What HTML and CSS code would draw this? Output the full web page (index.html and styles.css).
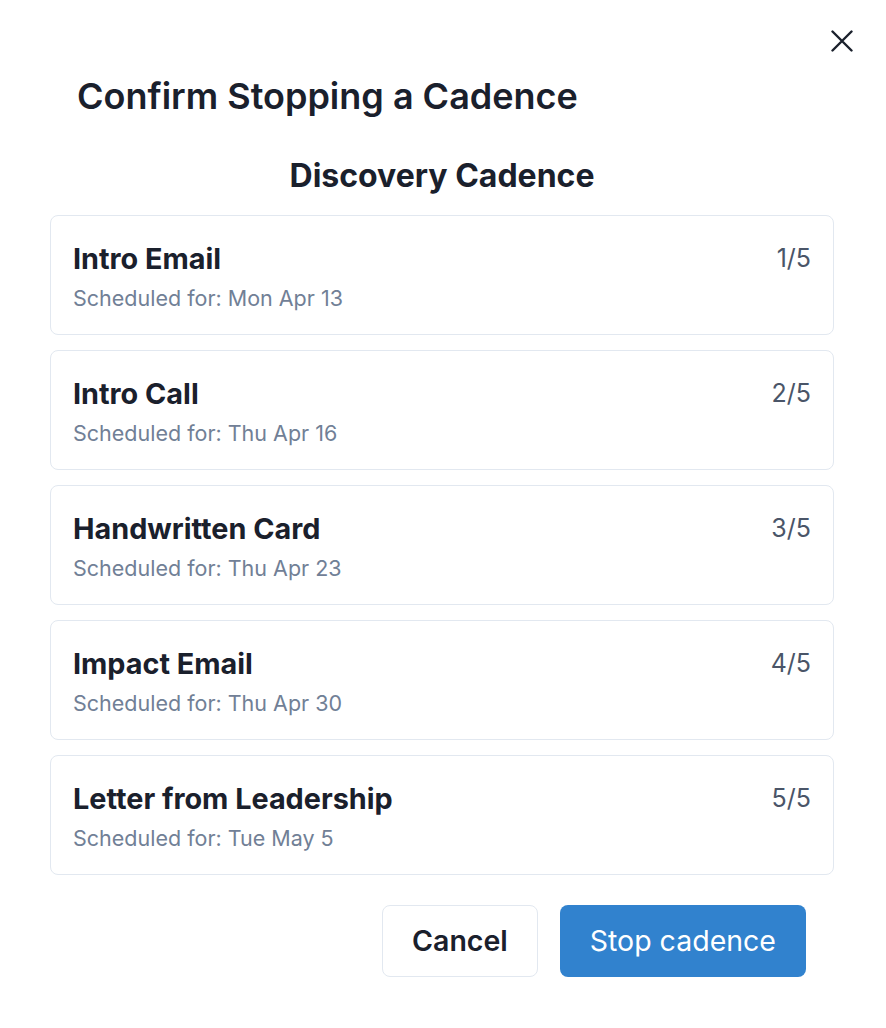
FILE: index.html
```html
<!DOCTYPE html>
<html lang="en">

<head>
    <meta charset="UTF-8">
    <meta name="viewport" content="width=device-width, initial-scale=1.0">
    <title>Confirm Stopping a Cadence</title>
    <link rel="stylesheet" href="styles.css">
</head>

<body>

    <div class="modal">
        <button class="modal-close" aria-label="Close">
            <svg width="22" height="22" viewBox="0 0 22 22">
                <path d="M1.5 1.5 L20.5 20.5 M20.5 1.5 L1.5 20.5" stroke="#1a202c" stroke-width="2.4" stroke-linecap="round" />
            </svg>
        </button>

        <h1 class="modal-title">Confirm Stopping a Cadence</h1>

        <div class="modal-body">
            <h2 class="cadence-name">Discovery Cadence</h2>

            <ul class="steps">
                <li class="step">
                    <div class="step-info">
                        <div class="step-title">Intro Email</div>
                        <div class="step-date">Scheduled for: Mon Apr 13</div>
                    </div>
                    <div class="step-count">1/5</div>
                </li>
                <li class="step">
                    <div class="step-info">
                        <div class="step-title">Intro Call</div>
                        <div class="step-date">Scheduled for: Thu Apr 16</div>
                    </div>
                    <div class="step-count">2/5</div>
                </li>
                <li class="step">
                    <div class="step-info">
                        <div class="step-title">Handwritten Card</div>
                        <div class="step-date">Scheduled for: Thu Apr 23</div>
                    </div>
                    <div class="step-count">3/5</div>
                </li>
                <li class="step">
                    <div class="step-info">
                        <div class="step-title">Impact Email</div>
                        <div class="step-date">Scheduled for: Thu Apr 30</div>
                    </div>
                    <div class="step-count">4/5</div>
                </li>
                <li class="step">
                    <div class="step-info">
                        <div class="step-title">Letter from Leadership</div>
                        <div class="step-date">Scheduled for: Tue May 5</div>
                    </div>
                    <div class="step-count">5/5</div>
                </li>
            </ul>
        </div>

        <div class="modal-footer">
            <button class="btn btn-outline">Cancel</button>
            <button class="btn btn-primary">Stop cadence</button>
        </div>
    </div>

</body>

</html>
```

FILE: styles.css
```css
body {
    margin: 0;
    background-color: #fff;
    font-family: Inter, "Noto Sans", Arial, sans-serif;
    color: #1a202c;
}

.modal {
    position: relative;
    width: 886px;
    min-height: 1028px;
    box-sizing: border-box;
    padding: 75px 52px 0 50px;
}

.modal-close {
    position: absolute;
    top: 30px;
    left: 830px;
    width: 24px;
    height: 24px;
    padding: 0;
    border: none;
    background: none;
    cursor: pointer;
}

.modal-title {
    margin: 0 0 39px 27px;
    font-size: 36px;
    font-weight: 600;
    line-height: 1.2;
}

.cadence-name {
    margin: 0 0 19px;
    text-align: center;
    font-size: 32px;
    font-weight: 700;
    line-height: 1.2;
}

.steps {
    list-style: none;
    margin: 0;
    padding: 0;
    display: flex;
    flex-direction: column;
    gap: 15px;
}

.step {
    display: flex;
    justify-content: space-between;
    align-items: flex-start;
    padding: 23px 22px 21px;
    border: 1px solid #e2e8f0;
    border-radius: 8px;
}

.step-title {
    font-size: 28.8px;
    font-weight: 700;
    line-height: 40px;
}

.step-date {
    margin-top: 4px;
    font-size: 21.5px;
    line-height: 30px;
    color: #718096;
}

.step-count {
    padding-top: 2px;
    font-size: 25px;
    line-height: 35px;
    color: #4a5568;
}

.modal-footer {
    display: flex;
    justify-content: flex-end;
    gap: 22px;
    margin-top: 30px;
    padding-right: 28px;
}

.btn {
    height: 72px;
    padding: 0 30px;
    border-radius: 8px;
    font-family: inherit;
    font-size: 28.5px;
    cursor: pointer;
}

.btn-outline {
    padding: 0 29px;
    background-color: #fff;
    border: 1px solid #e2e8f0;
    color: #1a202c;
    font-weight: 600;
}

.btn-primary {
    background-color: #3182ce;
    border: none;
    color: #fff;
    font-weight: 400;
}
```
